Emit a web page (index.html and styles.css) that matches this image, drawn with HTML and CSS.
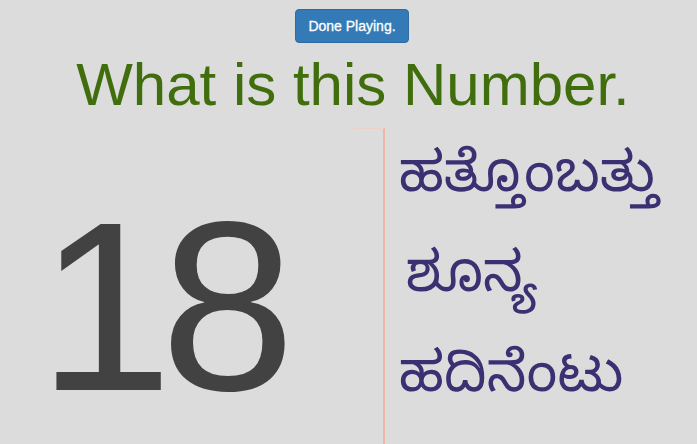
FILE: index.html
```html
<!DOCTYPE html>
<html>
<head>
<meta charset="utf-8">
<link rel="stylesheet" href="styles.css">
</head>
<body>
<div class="page">
  <div class="top">
    <button class="btn">Done Playing.</button>
  </div>
  <h1 class="title">What is this Number.</h1>
  <div class="game">
    <div class="number-col">
      <div class="number">18</div>
    </div>
    <div class="divider"></div>
    <div class="words">
      <div class="word">ಹತ್ತೊಂಬತ್ತು</div>
      <div class="word indent">ಶೂನ್ಯ</div>
      <div class="word">ಹದಿನೆಂಟು</div>
    </div>
  </div>
</div>
</body>
</html>
```

FILE: styles.css
```css
html, body {
  margin: 0;
  padding: 0;
  background: #dcdcdc;
  overflow: hidden;
}
.page {
  width: 697px;
  height: 444px;
  font-family: "Liberation Sans", Arial, sans-serif;
}
.top {
  display: flex;
  justify-content: center;
  padding-top: 9px;
  padding-left: 7px;
}
.btn {
  font-family: "Liberation Sans", Arial, sans-serif;
  font-size: 14px;
  line-height: 20px;
  color: #fff;
  background: #337ab7;
  border: 1px solid #2e6da4;
  border-radius: 4px;
  padding: 6px 12px;
  width: 114px;
  height: 34px;
  -webkit-text-stroke: 0.3px #fff;
}
.title {
  margin: 8px 0 0 0;
  text-align: center;
  padding-left: 9px;
  font-weight: normal;
  font-size: 60px;
  line-height: 68px;
  color: #416e0d;
}
.game {
  display: flex;
  margin-top: 9px;
}
.number-col {
  width: 354px;
  display: flex;
  justify-content: flex-start;
}
.number {
  font-size: 242px;
  line-height: 1;
  color: #424242;
  padding-left: 38px;
  padding-top: 57px;
  letter-spacing: -12px;
}
.divider {
  width: 29px;
  height: 330px;
  border-top: 1px solid #efd0c6;
  border-right: 2px solid #efb7a6;
}
.words {
  padding-left: 14px;
  padding-top: 7px;
  display: flex;
  flex-direction: column;
  font-family: "Noto Sans Kannada", "Noto Sans", sans-serif;
  color: #3a3072;
  font-size: 56px;
}
.word {
  height: 100px;
  line-height: 98px;
}
.indent {
  padding-left: 7px;
}
```
